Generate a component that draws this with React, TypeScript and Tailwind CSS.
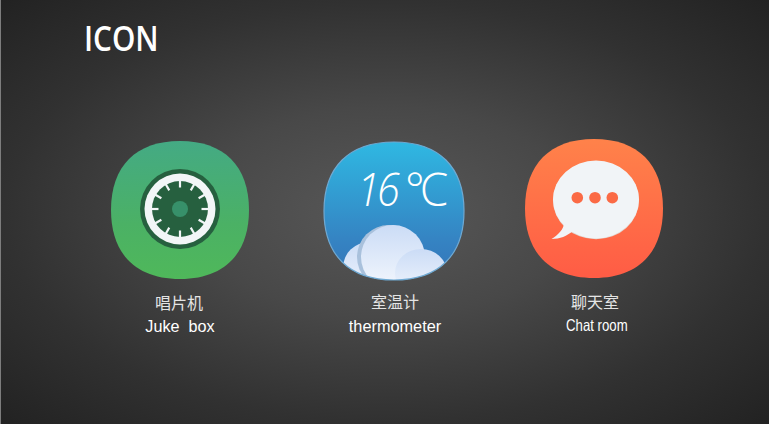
const squircle = "M69 0C113 0 138 25 138 69C138 113 113 138 69 138C25 138 0 113 0 69C0 25 25 0 69 0Z";
const weatherShape = "M71 1C116 1 141 26 141 70C141 114 116 139 71 139C26 139 1 114 1 70C1 26 26 1 71 1Z";

const ticks = [0, 30, 60, 90, 120, 150, 180, 210, 240, 270, 300, 330];

function JukeIcon() {
  return (
    <svg width="138" height="138" viewBox="0 0 138 138">
      <defs>
        <linearGradient id="juke" x1="0" y1="0" x2="0" y2="1">
          <stop offset="0" stopColor="#44aa84" />
          <stop offset="0.6" stopColor="#4bb165" />
          <stop offset="1" stopColor="#4fb85a" />
        </linearGradient>
      </defs>
      <path d={squircle} fill="url(#juke)" />
      <circle cx="69" cy="68" r="40" fill="#26603f" />
      <circle cx="69" cy="68" r="35.500" fill="#f2f6f7" />
      <circle cx="69" cy="68" r="28" fill="#26603f" />
      {ticks.map((a) => (
        <rect key={a} x="67.900" y="39.500" width="2.200" height="7" fill="#f2f6f7" transform={`rotate(${a} 69 68)`} />
      ))}
      <circle cx="69" cy="68" r="8" fill="#37906a" />
    </svg>
  );
}

function WeatherIcon() {
  return (
    <svg width="142" height="140" viewBox="0 0 142 140">
      <defs>
        <linearGradient id="sky" x1="0" y1="0" x2="0" y2="1">
          <stop offset="0" stopColor="#2fb8e2" />
          <stop offset="0.7" stopColor="#3584c3" />
          <stop offset="1" stopColor="#3474b8" />
        </linearGradient>
        <linearGradient id="cloud" x1="0" y1="0" x2="0" y2="1">
          <stop offset="0" stopColor="#cbdcf6" />
          <stop offset="1" stopColor="#f3f7fd" />
        </linearGradient>
        <clipPath id="shape">
          <path d={weatherShape} />
        </clipPath>
      </defs>
      <path d={weatherShape} fill="url(#sky)" />
      <g clipPath="url(#shape)">
        <circle cx="46" cy="127" r="26" fill="url(#cloud)" />
        <circle cx="66" cy="116" r="32" fill="#a9c1dc" />
        <circle cx="70" cy="116" r="32" fill="url(#cloud)" />
        <ellipse cx="98" cy="132" rx="26" ry="24" fill="url(#cloud)" />
      </g>
      <path d={weatherShape} fill="none" stroke="#6fa9d2" strokeWidth="1.200" />
    </svg>
  );
}

function ChatIcon() {
  return (
    <svg width="138" height="139" viewBox="0 0 138 139">
      <defs>
        <linearGradient id="chat" x1="0" y1="0" x2="0" y2="1">
          <stop offset="0" stopColor="#ff824a" />
          <stop offset="1" stopColor="#ff5c45" />
        </linearGradient>
      </defs>
      <path d="M69 0C113 0 138 25 138 69.500C138 114 113 139 69 139C25 139 0 114 0 69.500C0 25 25 0 69 0Z" fill="url(#chat)" />
      <ellipse cx="71" cy="61.300" rx="43" ry="39" fill="#e2d5cf" />
      <ellipse cx="71" cy="60.500" rx="43" ry="39" fill="#f1f4f7" />
      <path d="M39 84C39 90 33 96 26.500 100C35 100 42 97 48 92Z" fill="#f1f4f7" />
      <circle cx="52.300" cy="58.700" r="5.800" fill="#fb6a45" />
      <circle cx="70" cy="58.700" r="5.800" fill="#fb6a45" />
      <circle cx="87.300" cy="58.700" r="5.800" fill="#fb6a45" />
    </svg>
  );
}

export default function App() {
  return (
    <div className="h-[424px] w-[769px] overflow-hidden border-l border-[#7d7d7d] bg-[radial-gradient(ellipse_at_50%_50%,#585858_0%,#484848_35%,#313131_70%,#222222_100%)] font-['Liberation_Sans','Noto_Sans_CJK_SC',sans-serif] text-white">
      <h1 className="pl-[83px] pt-[19px] font-['Open_Sans',sans-serif] text-[35px] leading-[38px] font-semibold">
        <span className="inline-block origin-left scale-x-[0.85]">ICON</span>
      </h1>

      <div className="mt-[84px] flex pl-[110px]">
        <div className="flex w-[138px] flex-col items-center">
          <JukeIcon />
          <p className="mt-[15px] pr-[2px] text-base leading-5 text-[#e4e4e4]">唱片机</p>
          <p className="mt-[2px] text-[16.2px] leading-5 whitespace-pre">Juke  box</p>
        </div>

        <div className="ml-[74px] flex w-[142px] flex-col items-center">
          <div className="relative h-[140px]">
            <WeatherIcon />
            <span className="absolute top-[17px] left-[34px] origin-left scale-x-[0.9] font-['Open_Sans',sans-serif] text-[46px] leading-[60px] font-light tracking-[-3px] whitespace-pre italic">16</span>
            <span className="absolute top-[17px] left-[82px] font-['Open_Sans',sans-serif] text-[46px] leading-[60px] font-light tracking-[-5px] whitespace-pre">°C</span>
          </div>
          <p className="mt-[12px] pl-[2px] text-base leading-5 text-[#e4e4e4]">室温计</p>
          <p className="mt-[3px] pl-[2px] text-[16.300px] leading-5">thermometer</p>
        </div>

        <div className="-mt-[2px] ml-[60px] flex w-[138px] flex-col items-center">
          <ChatIcon />
          <p className="mt-[15px] pl-[2px] text-base leading-5 text-[#e4e4e4]">聊天室</p>
          <p className="mt-[2px] scale-x-[0.8] pl-[7px] text-[16.5px] leading-5 whitespace-pre">Chat room</p>
        </div>
      </div>
    </div>
  );
}
